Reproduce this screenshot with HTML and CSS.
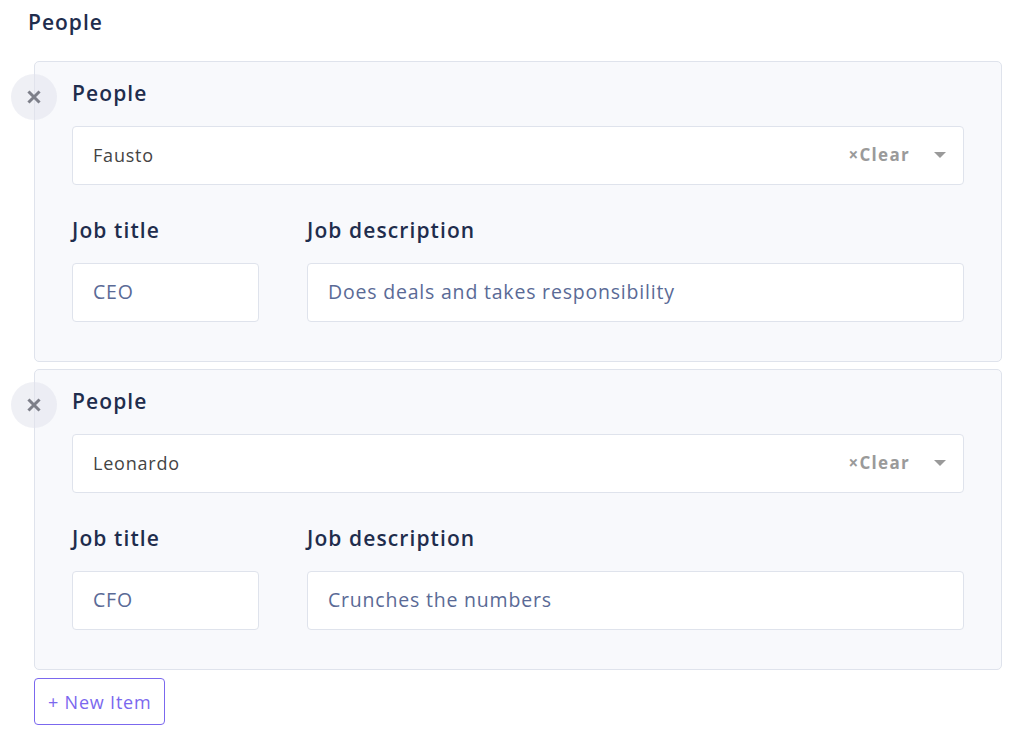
FILE: index.html
```html
<!DOCTYPE html>
<html>
<head>
<meta charset="utf-8">
<link rel="stylesheet" href="styles.css">
</head>
<body>
<div class="page">
  <div class="title">People</div>
  <div class="list">
    <div class="card">
      <button class="remove"><svg width="14" height="14" viewBox="0 0 14 14"><path d="M2.5 2.5L11.5 11.5M11.5 2.5L2.5 11.5" stroke="#7d7f89" stroke-width="3" stroke-linecap="square"/></svg></button>
      <div class="label">People</div>
      <div class="select">
        <span class="value">Fausto</span>
        <span class="clear">×Clear</span>
        <span class="caret"></span>
      </div>
      <div class="row">
        <div class="field small">
          <div class="label">Job title</div>
          <div class="input">CEO</div>
        </div>
        <div class="field grow">
          <div class="label">Job description</div>
          <div class="input">Does deals and takes responsibility</div>
        </div>
      </div>
    </div>
    <div class="card">
      <button class="remove"><svg width="14" height="14" viewBox="0 0 14 14"><path d="M2.5 2.5L11.5 11.5M11.5 2.5L2.5 11.5" stroke="#7d7f89" stroke-width="3" stroke-linecap="square"/></svg></button>
      <div class="label">People</div>
      <div class="select">
        <span class="value">Leonardo</span>
        <span class="clear">×Clear</span>
        <span class="caret"></span>
      </div>
      <div class="row">
        <div class="field small">
          <div class="label">Job title</div>
          <div class="input">CFO</div>
        </div>
        <div class="field grow">
          <div class="label">Job description</div>
          <div class="input">Crunches the numbers</div>
        </div>
      </div>
    </div>
  </div>
  <button class="new">+ New Item</button>
</div>
</body>
</html>
```
FILE: styles.css
```css
* { box-sizing: border-box; }
body {
  margin: 0;
  background: #ffffff;
  font-family: "Open Sans", "Noto Sans", sans-serif;
  color: #1f2d4d;
}
.page {
  padding: 8px 22px 0 34px;
}
.title {
  font-size: 21px;
  font-weight: 600;
  color: #1f2d4d;
  margin-left: -6px;
  line-height: 28px;
  margin-bottom: 25px;
  letter-spacing: 1px;
}
.list {
  display: flex;
  flex-direction: column;
  gap: 7px;
}
.card {
  position: relative;
  background: #f8f9fc;
  border: 1px solid #dfe3ec;
  border-radius: 5px;
  padding: 17px 37px 39px 37px;
}
.remove {
  position: absolute;
  left: -24px;
  top: 12px;
  width: 46px;
  height: 46px;
  border-radius: 50%;
  border: none;
  background: rgba(225, 228, 236, 0.55);
  display: flex;
  align-items: center;
  justify-content: center;
  padding: 0;
}
.label {
  font-size: 21px;
  font-weight: 600;
  line-height: 28px;
  color: #1f2d4d;
  margin-bottom: 19px;
  letter-spacing: 1.1px;
}
.select {
  display: flex;
  align-items: center;
  height: 59px;
  background: #fff;
  border: 1px solid #dfe3ec;
  border-radius: 4px;
  padding: 0 17px 2px 20px;
  margin-bottom: 31px;
}
.value {
  flex: 1;
  font-size: 18px;
  color: #444;
  letter-spacing: 0.8px;
}
.clear {
  font-size: 17px;
  font-weight: 700;
  color: #9a9a9a;
  margin-right: 24px;
  letter-spacing: 1.3px;
}
.caret {
  width: 0;
  height: 0;
  border-left: 6px solid transparent;
  border-right: 6px solid transparent;
  border-top: 6px solid #9a9a9a;
}
.row {
  display: flex;
  gap: 48px;
}
.field.small { width: 187px; }
.field.grow { flex: 1; }
.row .label { margin-bottom: 19px; }
.input {
  height: 59px;
  background: #fff;
  border: 1px solid #dfe3ec;
  border-radius: 4px;
  padding: 0 20px 2px;
  display: flex;
  align-items: center;
  font-size: 19.5px;
  color: #5a6a96;
  letter-spacing: 0.8px;
}
.new {
  margin-top: 8px;
  height: 47px;
  padding: 0 13px;
  background: #fff;
  border: 1.5px solid #7b68ee;
  border-radius: 4px;
  color: #7b68ee;
  font-family: "Open Sans", "Noto Sans", sans-serif;
  font-size: 18px;
  letter-spacing: 0.8px;
}
```
